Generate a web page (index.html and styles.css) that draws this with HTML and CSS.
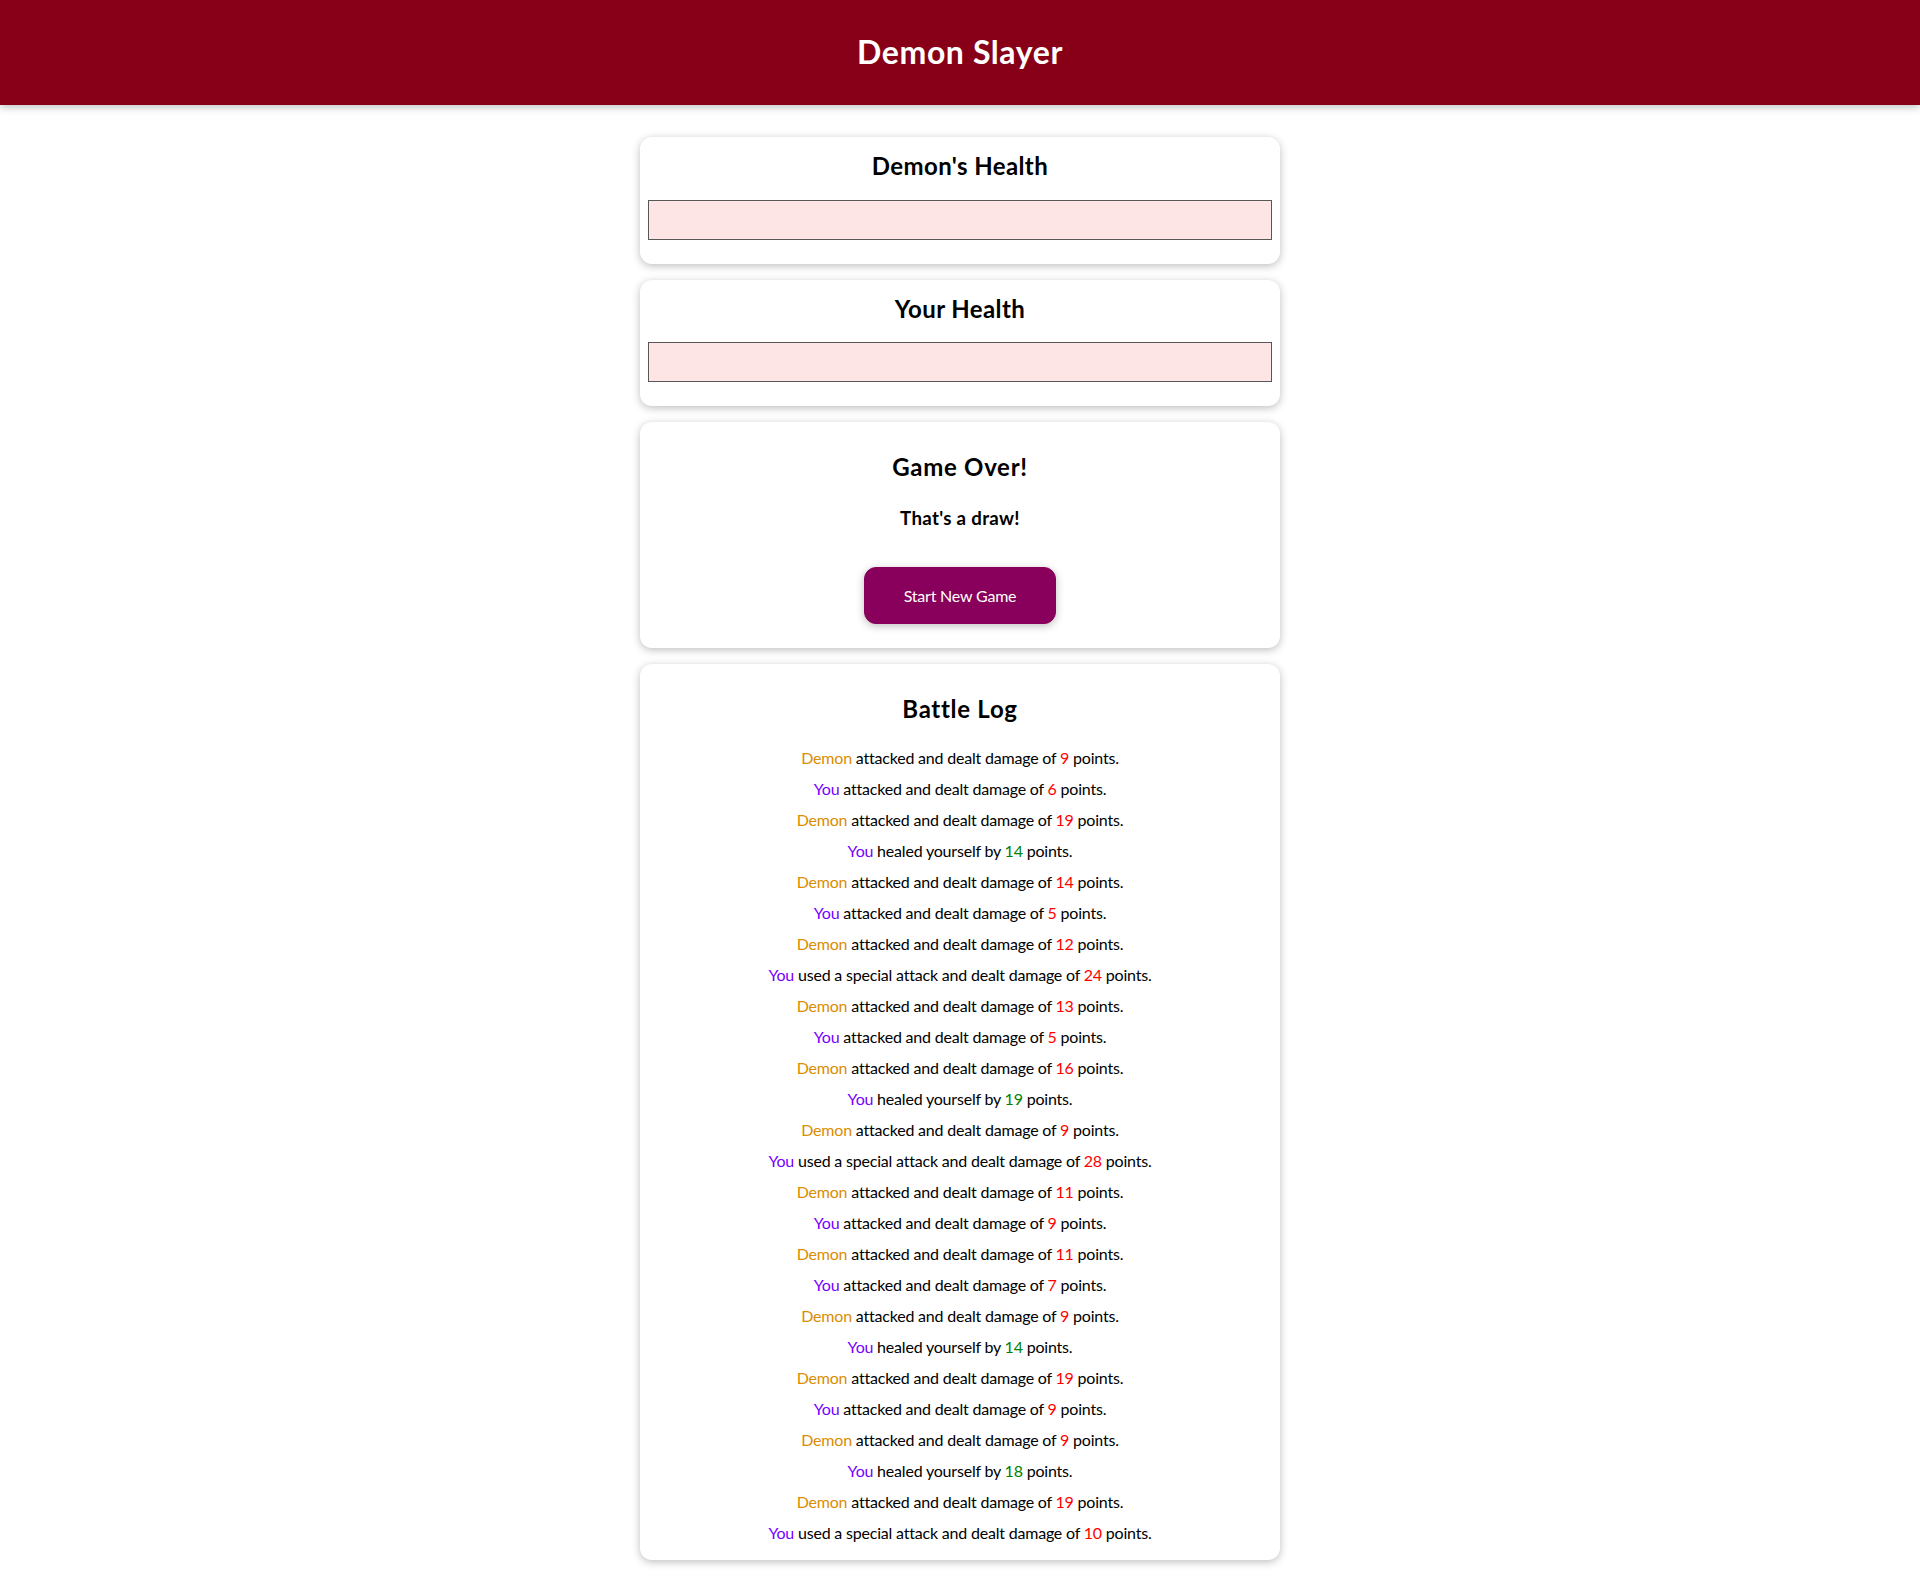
FILE: index.html
```html
<!DOCTYPE html>
<html lang="en">
<head>
<meta charset="utf-8">
<title>Demon Slayer</title>
<link rel="stylesheet" href="styles.css">
</head>
<body>
<header class="app-header">
  <h1 class="app-title">Demon Slayer</h1>
</header>
<div class="game">
  <section class="container health-card">
    <h2 class="card-title">Demon's Health</h2>
    <div class="healthbar"><div class="healthbar__value"></div></div>
  </section>
  <section class="container health-card">
    <h2 class="card-title">Your Health</h2>
    <div class="healthbar"><div class="healthbar__value"></div></div>
  </section>
  <section class="container result">
    <h2 class="result-title">Game Over!</h2>
    <h3 class="result-text">That's a draw!</h3>
    <button class="btn">Start New Game</button>
  </section>
  <section class="container log">
    <h2 class="result-title">Battle Log</h2>
    <ul class="log-list">
      <li><span class="log--monster">Demon</span> attacked and dealt damage of <span class="log--damage">9</span> points.</li>
      <li><span class="log--player">You</span> attacked and dealt damage of <span class="log--damage">6</span> points.</li>
      <li><span class="log--monster">Demon</span> attacked and dealt damage of <span class="log--damage">19</span> points.</li>
      <li><span class="log--player">You</span> healed yourself by <span class="log--heal">14</span> points.</li>
      <li><span class="log--monster">Demon</span> attacked and dealt damage of <span class="log--damage">14</span> points.</li>
      <li><span class="log--player">You</span> attacked and dealt damage of <span class="log--damage">5</span> points.</li>
      <li><span class="log--monster">Demon</span> attacked and dealt damage of <span class="log--damage">12</span> points.</li>
      <li><span class="log--player">You</span> used a special attack and dealt damage of <span class="log--damage">24</span> points.</li>
      <li><span class="log--monster">Demon</span> attacked and dealt damage of <span class="log--damage">13</span> points.</li>
      <li><span class="log--player">You</span> attacked and dealt damage of <span class="log--damage">5</span> points.</li>
      <li><span class="log--monster">Demon</span> attacked and dealt damage of <span class="log--damage">16</span> points.</li>
      <li><span class="log--player">You</span> healed yourself by <span class="log--heal">19</span> points.</li>
      <li><span class="log--monster">Demon</span> attacked and dealt damage of <span class="log--damage">9</span> points.</li>
      <li><span class="log--player">You</span> used a special attack and dealt damage of <span class="log--damage">28</span> points.</li>
      <li><span class="log--monster">Demon</span> attacked and dealt damage of <span class="log--damage">11</span> points.</li>
      <li><span class="log--player">You</span> attacked and dealt damage of <span class="log--damage">9</span> points.</li>
      <li><span class="log--monster">Demon</span> attacked and dealt damage of <span class="log--damage">11</span> points.</li>
      <li><span class="log--player">You</span> attacked and dealt damage of <span class="log--damage">7</span> points.</li>
      <li><span class="log--monster">Demon</span> attacked and dealt damage of <span class="log--damage">9</span> points.</li>
      <li><span class="log--player">You</span> healed yourself by <span class="log--heal">14</span> points.</li>
      <li><span class="log--monster">Demon</span> attacked and dealt damage of <span class="log--damage">19</span> points.</li>
      <li><span class="log--player">You</span> attacked and dealt damage of <span class="log--damage">9</span> points.</li>
      <li><span class="log--monster">Demon</span> attacked and dealt damage of <span class="log--damage">9</span> points.</li>
      <li><span class="log--player">You</span> healed yourself by <span class="log--heal">18</span> points.</li>
      <li><span class="log--monster">Demon</span> attacked and dealt damage of <span class="log--damage">19</span> points.</li>
      <li><span class="log--player">You</span> used a special attack and dealt damage of <span class="log--damage">10</span> points.</li>
    </ul>
  </section>
</div>
</body>
</html>
```
FILE: styles.css
```css
* {
  box-sizing: border-box;
}

html {
  font-family: "Lato", "Open Sans", sans-serif;
  line-height: 1.445;
}

body {
  margin: 0;
  color: #000;
  background: #fff;
}

.app-header {
  padding: 0.5rem;
  background-color: #880017;
  color: #fff;
  text-align: center;
  margin-bottom: 2rem;
  box-shadow: 0 2px 8px rgba(0, 0, 0, 0.26);
}

.app-title {
  font-size: 2rem;
  font-weight: 700;
  margin: 0.67em 0;
  letter-spacing: 0.6px;
}

.container {
  width: 90%;
  max-width: 40rem;
  margin: 1rem auto;
  text-align: center;
  padding: 0.5rem;
  box-shadow: 0 2px 8px rgba(0, 0, 0, 0.26);
  border-radius: 12px;
  background: #fff;
}

.card-title {
  font-size: 1.5rem;
  font-weight: 700;
  margin: 0.25rem;
  letter-spacing: 0.4px;
}

.result-title {
  font-size: 1.5rem;
  font-weight: 700;
  margin: 0.83em 0;
  letter-spacing: 0.7px;
}

.result-text {
  font-size: 1.17rem;
  font-weight: 700;
  margin: 1em 0;
  letter-spacing: 0.3px;
}

.healthbar {
  width: 100%;
  height: 40px;
  border: 1px solid #575757;
  margin: 1rem 0;
  background: #fde5e5;
}

.healthbar__value {
  width: 0%;
  height: 100%;
  background-color: #00a876;
}

.btn {
  font: inherit;
  line-height: 1.445;
  letter-spacing: -0.2px;
  border: 1px solid #88005b;
  background-color: #88005b;
  color: #fff;
  padding: 1rem 2rem;
  border-radius: 12px;
  margin: 1rem;
  width: 12rem;
  cursor: pointer;
  box-shadow: 0 2px 8px rgba(0, 0, 0, 0.26);
}

.log-list {
  list-style: none;
  margin: 0;
  padding: 0;
}

.log-list li {
  margin: 0.5rem 0;
  line-height: 23px;
  letter-spacing: -0.2px;
}

.log--player {
  color: #7700ff;
}

.log--monster {
  color: #da8d00;
}

.log--damage {
  color: red;
}

.log--heal {
  color: green;
}
```
